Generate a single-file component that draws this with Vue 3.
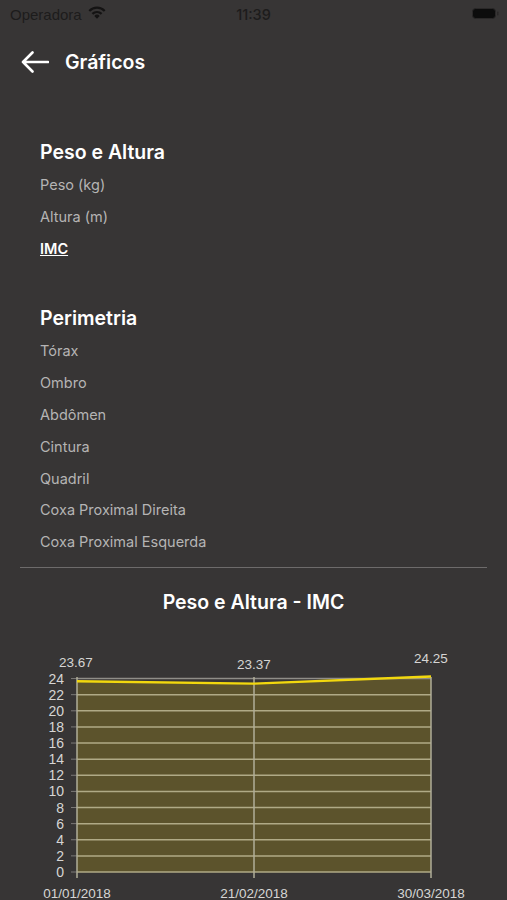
<script setup>
const groups = [
  {
    title: 'Peso e Altura',
    items: [{ label: 'Peso (kg)' }, { label: 'Altura (m)' }, { label: 'IMC', active: true }],
  },
  {
    title: 'Perimetria',
    items: [
      { label: 'Tórax' },
      { label: 'Ombro' },
      { label: 'Abdômen' },
      { label: 'Cintura' },
      { label: 'Quadril' },
      { label: 'Coxa Proximal Direita' },
      { label: 'Coxa Proximal Esquerda' },
    ],
  },
]

// chart geometry, in px of the svg
const left = 77
const right = 431
const y0 = 233
const unit = 8.06
const yOf = (v) => y0 - v * unit

const ticks = []
for (let v = 0; v <= 24; v += 2) ticks.push({ v, y: yOf(v) })

const points = [
  { x: 77, v: 23.67, date: '01/01/2018', labelY: 28, labelX: 76 },
  { x: 254, v: 23.37, date: '21/02/2018', labelY: 30, labelX: 254 },
  { x: 431, v: 24.25, date: '30/03/2018', labelY: 24, labelX: 431 },
]
const linePts = points.map((p) => `${p.x},${yOf(p.v)}`).join(' ')
const areaPts = `${left},${y0} ${linePts} ${right},${y0}`
</script>

<template>
  <div class="screen">
    <div class="status">
      <div class="status-left">
        <span>Operadora</span>
        <svg class="wifi" viewBox="0 0 18 13" width="18" height="13">
          <path class="wifi-arc" d="M1.300 4.900A10.800 10.800 0 0 1 16.700 4.900" />
          <path class="wifi-arc" d="M4.400 7.900A6.500 6.500 0 0 1 13.600 7.900" />
          <path d="M9 12.800 6.300 9.900A3.800 3.800 0 0 1 11.700 9.900z" />
        </svg>
      </div>
      <span class="clock">11:39</span>
      <svg class="battery" viewBox="0 0 28 13" width="28" height="13">
        <rect x="0.500" y="1.500" width="23" height="10" rx="3" fill="#0c0c0c" stroke="#2a2828" />
        <rect x="25" y="4.500" width="1.500" height="4" rx="0.700" fill="#2a2828" />
      </svg>
    </div>

    <header class="topbar">
      <svg class="back" viewBox="0 0 28 22" width="28" height="22">
        <path d="M27 11H2M11.500 1.500 2 11l9.500 9.500" fill="none" stroke="#fff" stroke-width="2.600" stroke-linecap="round" stroke-linejoin="round" />
      </svg>
      <h1>Gráficos</h1>
    </header>

    <section v-for="g in groups" :key="g.title" class="group">
      <h2>{{ g.title }}</h2>
      <a v-for="it in g.items" :key="it.label" class="item" :class="{ 'item--active': it.active }">{{ it.label }}</a>
    </section>

    <hr class="rule" />

    <h3 class="chart-title">Peso e Altura - IMC</h3>

    <svg class="chart" width="507" height="270" viewBox="0 0 507 270">
      <polygon :points="areaPts" fill="#5c532c" />
      <line x1="77" x2="431" :y1="yOf(24)" :y2="yOf(24)" stroke="#8f8d88" stroke-width="1.500" />
      <line v-for="t in ticks.slice(0, 12)" :key="t.v" x1="77" x2="431" :y1="t.y" :y2="t.y" stroke="#b0aa86" stroke-width="1.500" />
      <line v-for="t in ticks" :key="'m' + t.v" x1="71" x2="77" :y1="t.y" :y2="t.y" stroke="#7c7a78" stroke-width="1" />
      <line v-for="p in points" :key="'x' + p.x" :x1="p.x" :x2="p.x" :y1="yOf(24.2)" :y2="y0 + 6" stroke="#b0ae98" stroke-width="1.500" />
      <polyline :points="linePts" fill="none" stroke="#f2d80e" stroke-width="2.400" />

      <text v-for="t in ticks" :key="'l' + t.v" x="64" :y="t.y + 5" text-anchor="end" class="axis">{{ t.v }}</text>
      <text v-for="p in points" :key="'v' + p.x" :x="p.labelX" :y="p.labelY" text-anchor="middle" class="value">{{ p.v }}</text>
      <text v-for="p in points" :key="'d' + p.x" :x="p.x" y="259" text-anchor="middle" class="value">{{ p.date }}</text>
    </svg>
  </div>
</template>

<style scoped>
.screen {
  width: 507px;
  height: 900px;
  overflow: hidden;
  background: #373535;
  font-family: Inter, "Liberation Sans", sans-serif;
  color: #fff;
}

.status {
  height: 28px;
  padding: 0 7px 0 10px;
  display: flex;
  align-items: center;
  justify-content: space-between;
  position: relative;
  font-family: "Liberation Sans", sans-serif;
  font-size: 15px;
  color: #1d1c1c;
}

.status-left {
  display: flex;
  align-items: center;
  gap: 6px;
}

.wifi {
  fill: #141313;
  margin-top: -3px;
}

.wifi-arc {
  fill: none;
  stroke: #141313;
  stroke-width: 2.200;
}

.clock {
  position: absolute;
  left: 0;
  right: 0;
  text-align: center;
  font-family: Inter, "Liberation Sans", sans-serif;
  font-size: 14.500px;
  font-weight: 500;
}

.battery {
  margin-top: -2px;
}

.topbar {
  height: 40px;
  margin-top: 14px;
  padding-left: 21px;
  display: flex;
  align-items: center;
  gap: 16px;
}

.topbar h1 {
  margin: 0;
  font-size: 19.500px;
  font-weight: 600;
}

.group {
  padding-left: 40px;
  display: flex;
  flex-direction: column;
  align-items: flex-start;
  margin-top: 56px;
}

.group + .group {
  margin-top: 40px;
}

.group h2 {
  margin: 0 0 3px;
  height: 28px;
  line-height: 28px;
  font-size: 19.500px;
  font-weight: 600;
}

.item {
  height: 31.800px;
  line-height: 31.800px;
  font-size: 14.500px;
  color: #b5b4b4;
}

.item--active {
  color: #fff;
  font-weight: 600;
  text-decoration: underline;
}

.rule {
  margin: 9px 20px 0;
  border: 0;
  height: 1px;
  background: #6d6b6b;
}

.chart-title {
  margin: 20px 0 0;
  height: 28px;
  line-height: 28px;
  text-align: center;
  font-size: 19.500px;
  font-weight: 600;
}

.chart {
  display: block;
  margin-top: 23px;
}

.axis,
.value {
  font-family: "Liberation Sans", sans-serif;
  font-size: 14px;
  fill: #d6d5d4;
}

.value {
  font-size: 13.500px;
}
</style>

<style>
html,
body {
  background: #373535;
}
</style>
